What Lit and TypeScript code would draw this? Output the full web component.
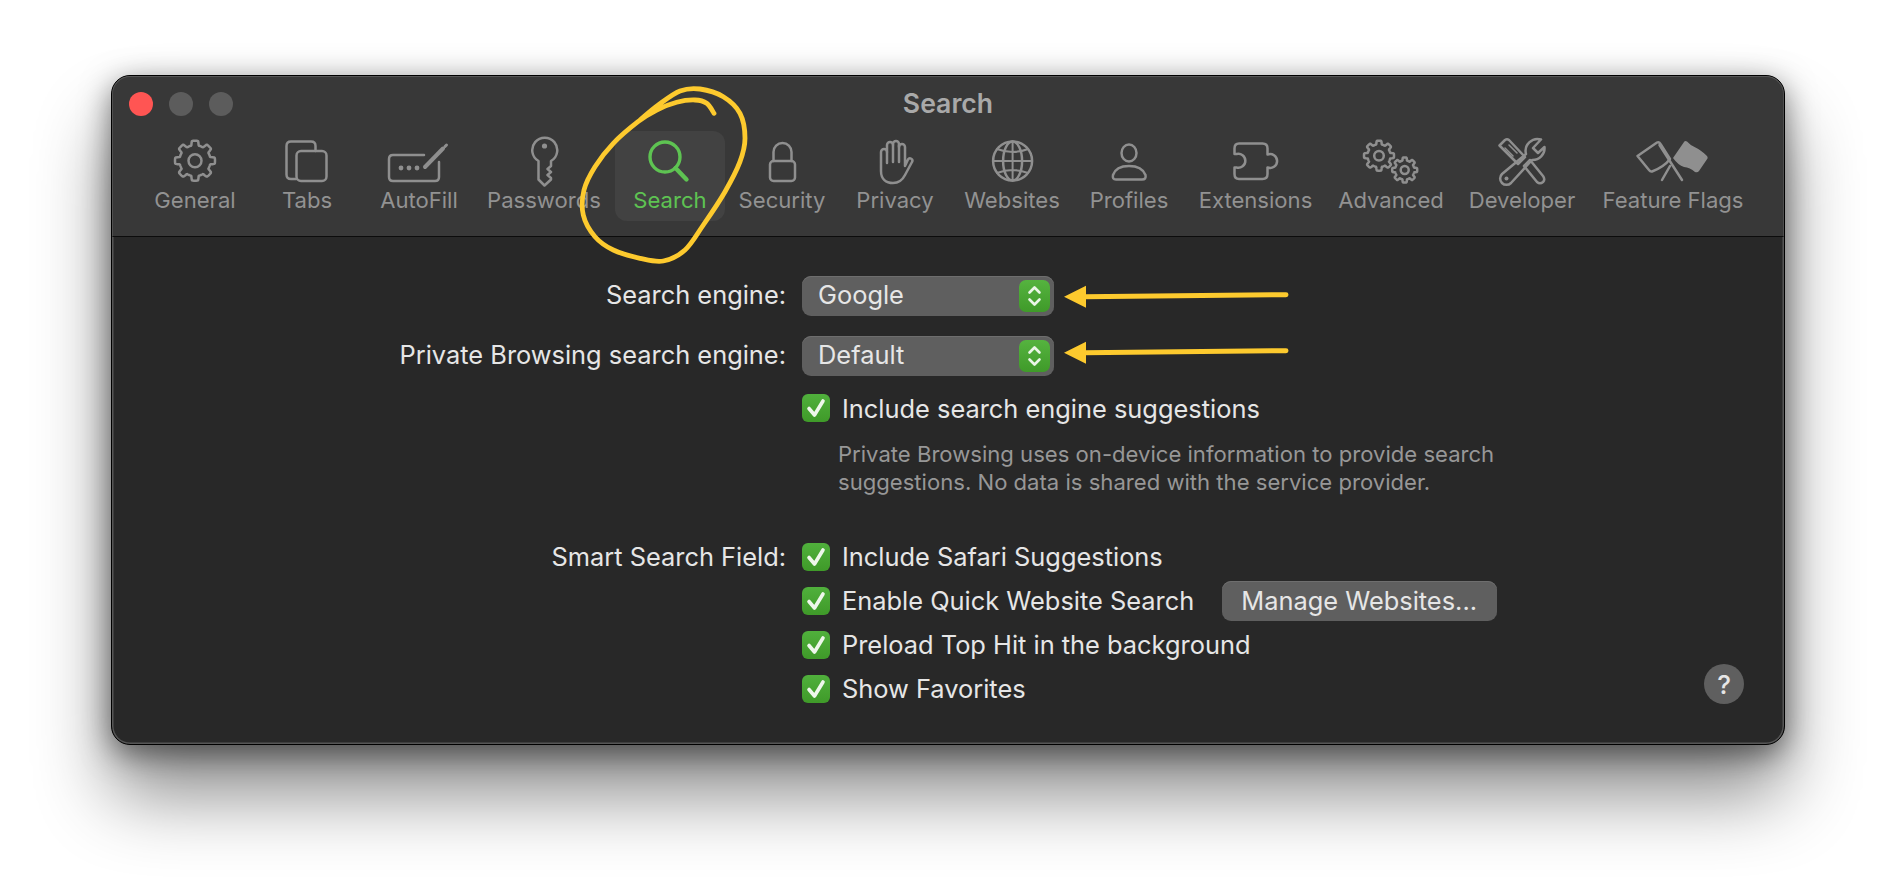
import { LitElement, css, html, svg } from 'lit';
import { customElement } from 'lit/decorators.js';

// smooth gear outline, teeth are rounded lobes like the SF symbol
function gear(cx: number, cy: number, outer: number, inner: number, teeth = 8) {
    const pts: string[] = [];
    const steps = teeth * 24;
    for (let i = 0; i < steps; i++) {
        const a = (i / steps) * Math.PI * 2 - Math.PI / 2;
        const wave = Math.max(0, Math.min(1, Math.cos(a * teeth + Math.PI / 2 * teeth) * 1.5 + 0.5));
        const r = inner + (outer - inner) * wave;
        pts.push(`${(cx + Math.cos(a) * r).toFixed(2)} ${(cy + Math.sin(a) * r).toFixed(2)}`);
    }
    return `M${pts.join('L')}Z`;
}

// catmull-rom through the sampled points of the hand drawn loop
function smooth(p: number[][]) {
    let d = `M${p[0][0]} ${p[0][1]}`;
    for (let i = 0; i < p.length - 1; i++) {
        const a = p[Math.max(i - 1, 0)], b = p[i], c = p[i + 1], e = p[Math.min(i + 2, p.length - 1)];
        const c1 = [b[0] + (c[0] - a[0]) / 6, b[1] + (c[1] - a[1]) / 6];
        const c2 = [c[0] - (e[0] - b[0]) / 6, c[1] - (e[1] - b[1]) / 6];
        d += `C${c1[0].toFixed(1)} ${c1[1].toFixed(1)} ${c2[0].toFixed(1)} ${c2[1].toFixed(1)} ${c[0]} ${c[1]}`;
    }
    return d;
}

const loop = [
    [714, 113.3], [706.7, 103.3], [695, 100], [676.7, 102.3], [656.7, 110], [638, 121.7],
    [613.3, 143.3], [595, 166.7], [584, 190], [583.3, 215], [595, 236.7], [613.3, 250],
    [640, 258.3], [663.3, 261], [685, 250], [703.3, 225], [725, 191.7], [740, 161.7],
    [745, 138.3], [740, 113.3], [723.3, 96.7], [700, 89], [680, 91], [658.3, 105], [640, 120],
];

const icons = {
    general: svg`<path d=${gear(194.7, 161.7, 20, 15.5)} /><circle cx="194.7" cy="161.7" r="6.5" />`,
    tabs: svg`<path d="M296 180 h-1 h-4 q-4.5 0 -4.5 -4.5 V147 q0 -4.5 4.5 -4.5 h20 q4.5 0 4.5 4.5 v5" /><rect x="296.5" y="152" width="30" height="30" rx="4.5" />`,
    autofill: svg`<path d="M424 156 H393 q-4 0 -4 4 V178 q0 4 4 4 H435 q4 0 4 -4 V163" />
        <path d="M425 168 L443 149.5" stroke-width="4" />
        <path d="M445 147.5 L446.5 146" stroke-width="3" />
        <g class="solid"><circle cx="401" cy="169" r="2.4" /><circle cx="409" cy="169" r="2.4" /><circle cx="417" cy="169" r="2.4" /></g>`,
    passwords: svg`<path d="M538.5 162 A12.5 12.5 0 1 1 551 162 V167 L547.5 170 L551 173 L547.5 176 L551 179 V180.5 L544.5 186.5 L538.5 180.5 Z" />
        <circle class="solid" cx="544.5" cy="147" r="2.6" />`,
    search: svg`<g class="green"><circle cx="665" cy="158" r="15" /><path d="M675.5 169 L686.5 180.5" stroke-width="4.4" /></g>`,
    security: svg`<rect x="770" y="162" width="25" height="20" rx="3.5" /><path d="M773.5 162 V153 a9 9 0 0 1 18 0 V162" />`,
    privacy: svg`<path d="M881 172 V153 a3 3 0 0 1 6 0 V146 a3 3 0 0 1 6 0 V145 a3 3 0 0 1 6 0 V148 a3 3 0 0 1 6 0 V167 L908 160.5 a2.3 2.3 0 0 1 4 2.5 L905 176 C902 182 897 184 893 184 C886 184 881 180 881 172 Z" />
        <path d="M887 153 V164 M893 146 V163 M899 146 V163" />`,
    websites: svg`<circle cx="1012.6" cy="162" r="19.5" /><ellipse cx="1012.6" cy="162" rx="9.5" ry="19.5" />
        <path d="M1012.6 142.5 V181.5 M993 162 H1032 M997 150 Q1012.6 156 1028 150 M997 174 Q1012.6 168 1028 174" stroke-width="2" />`,
    profiles: svg`<ellipse cx="1129" cy="154" rx="7.5" ry="8.5" /><path d="M1116 180.5 Q1112 180.5 1113 176 Q1116 167 1129 167 Q1142 167 1145.5 176 Q1146.5 180.5 1142 180.5 Z" />`,
    extensions: svg`<path d="M1238.5 144.5 H1262 Q1267 144.5 1267 149.5 V155.5 A7 7 0 1 1 1267 168.5 V175 Q1267 180 1262 180 H1238.5 Q1234 180 1234 175 V168.5 H1236 A7 7 0 1 0 1236 155 H1234 V149.5 Q1234 144.5 1238.5 144.5 Z" />`,
    advanced: svg`<path d=${gear(1379, 156.7, 15, 11.5)} /><circle cx="1379" cy="156.7" r="4.8" /><path d=${gear(1404.7, 171, 12.5, 9.6)} /><circle cx="1404.7" cy="171" r="4" />`,
    developer: svg`<path d="M1499.5 146.5 L1505 141 Q1507 139.5 1509 141 L1525 158 L1518 165 Z" />
        <path d="M1505 149 L1513 157 M1509 146 L1517 154" stroke-width="1.6" />
        <path d="M1524 167 L1530 161 L1543 177 Q1545.5 180.5 1543 183 Q1540 185.5 1537 183 Z" />
        <path d="M1541 140.5 A12 12 0 0 0 1526 155 L1502 175 A6.3 6.3 0 1 0 1511 184 L1532 161 A12 12 0 0 0 1544.5 148 L1538 154 L1533 149 Z" />
        <circle class="solid" cx="1506.5" cy="179.5" r="2" />`,
    flags: svg`<path d="M1637.5 157 L1657 143.5 Q1659 142.5 1660.5 145 L1670 160 Q1664 168 1652 172.5 Q1650.5 173 1649 171 Z" />
        <path d="M1659.5 146 L1682 181 M1662 181 L1670 167" />
        <path class="solid" d="M1673 159 L1684 143 Q1685 141.5 1687 142.5 Q1691 147 1695.5 148.5 Q1701 151 1707 157 Q1708 158 1707.5 159.5 L1699 172 Q1697.5 174 1695 173 Q1690 168.5 1684 168 Q1678 166 1673 159 Z" />`,
};

const tools = [
    { key: 'general', label: 'General', cx: 194.7 },
    { key: 'tabs', label: 'Tabs', cx: 307 },
    { key: 'autofill', label: 'AutoFill', cx: 419 },
    { key: 'passwords', label: 'Passwords', cx: 544 },
    { key: 'search', label: 'Search', cx: 670 },
    { key: 'security', label: 'Security', cx: 782 },
    { key: 'privacy', label: 'Privacy', cx: 895 },
    { key: 'websites', label: 'Websites', cx: 1012 },
    { key: 'profiles', label: 'Profiles', cx: 1129 },
    { key: 'extensions', label: 'Extensions', cx: 1255.5 },
    { key: 'advanced', label: 'Advanced', cx: 1391 },
    { key: 'developer', label: 'Developer', cx: 1522 },
    { key: 'flags', label: 'Feature Flags', cx: 1673 },
] as const;

const check = html`<span class="check"><svg viewBox="0 0 28 28" width="28" height="28"><path d="M7 14.5 L12.5 21 L21 7" /></svg></span>`;

@customElement('app-root')
export class AppRoot extends LitElement {
    static styles = css`
    :host{
        display:block;
        position:relative;
        height:892px;
        overflow:hidden;
        box-sizing:border-box;
        padding:75px 111px 0;
        background:#fff;
        font-family:Inter,"Liberation Sans",sans-serif;
    }
    .window{
        height:670px;
        box-sizing:border-box;
        display:flex;
        flex-direction:column;
        background:#282828;
        border-radius:19px;
        border:1px solid #000;
        box-shadow:inset 0 0 0 1.5px #565656, 0 50px 75px rgba(0,0,0,.45), 0 8px 30px rgba(0,0,0,.5);
        overflow:hidden;
    }
    .toolbar{
        height:161px;
        flex:none;
        box-sizing:border-box;
        background:#383838;
        border-top:1.5px solid #565656;
        border-left:1.5px solid #505050;
        border-right:1.5px solid #505050;
        border-bottom:1.5px solid #0c0c0c;
        border-radius:18px 18px 0 0;
        position:relative;
    }
    .titlebar{
        height:54px;
        display:flex;
        align-items:center;
        justify-content:center;
        color:#a9a9a9;
        font-size:26.6px;
        font-weight:600;
        padding-bottom:2px;
        box-sizing:border-box;
    }
    .lights{
        position:absolute;
        left:15.5px;
        top:15px;
        display:flex;
        gap:16px;
    }
    .lights span{
        width:24px;
        height:24px;
        border-radius:50%;
        background:#5c5c5c;
    }
    .lights span:first-child{ background:#ff5553; }
    .tools{
        display:grid;
        grid-template-columns:112px 112px 112px 138px 114px 110px 116px 118px 116px 137px 134px 128px 174px;
        padding-left:26px;
    }
    .tool{
        height:90px;
        box-sizing:border-box;
        display:flex;
        flex-direction:column;
        align-items:center;
        padding-top:4px;
        color:#929292;
        font-size:22.1px;
        white-space:nowrap;
    }
    .tool.on{
        background:#424242;
        border-radius:12px;
        margin:0 2px;
        color:#5ec352;
    }
    .tool svg{
        width:80px;
        height:52px;
        flex:none;
        fill:none;
        stroke:#8f8f8f;
        stroke-width:2.5;
        stroke-linecap:round;
        stroke-linejoin:round;
    }
    .tool .solid{ fill:#8f8f8f; stroke:none; }
    .tool .green{ stroke:#5ec352; stroke-width:3.4; }
    .tool span{ line-height:26px; margin-top:0; }
    .body{
        flex:1;
        position:relative;
        display:grid;
        grid-template-columns:674px 1fr;
        column-gap:16px;
        align-content:start;
        padding-top:39px;
        color:#e6e6e6;
        font-size:25.4px;
    }
    .label{
        text-align:right;
        line-height:38px;
        height:40px;
        white-space:nowrap;
    }
    .select{
        width:252px;
        height:40px;
        box-sizing:border-box;
        background:#5f5f5f;
        border-radius:9px;
        display:flex;
        align-items:center;
        justify-content:space-between;
        padding:0 4px 0 16px;
        box-shadow:inset 0 1px 0 #6e6e6e;
    }
    .select b{ font-weight:400; padding-bottom:4px; }
    .stepper{
        width:31px;
        height:32px;
        border-radius:7px;
        background:linear-gradient(#55b33f,#3f9a29);
        display:flex;
    }
    .stepper svg{ fill:none; stroke:#e9f5e6; stroke-width:2.6; stroke-linecap:round; stroke-linejoin:round; }
    .gap{ margin-top:20px; }
    .row{
        display:flex;
        align-items:center;
        gap:12px;
        height:28px;
        white-space:nowrap;
    }
    .txt{ padding-bottom:2px; }
    .check{
        width:28px;
        height:28px;
        flex:none;
        border-radius:6px;
        background:linear-gradient(#50b03c,#3f9a29);
        display:flex;
    }
    .check svg{ fill:none; stroke:#eef7eb; stroke-width:3.6; stroke-linecap:round; stroke-linejoin:round; }
    .first{ grid-column:2; margin-top:18px; }
    .note{
        grid-column:2;
        margin:18px 0 0 36px;
        color:#979797;
        font-size:22.1px;
        line-height:28px;
        white-space:nowrap;
    }
    .smart-label{ line-height:28px; height:28px; margin-top:47px; }
    .smart{
        margin-top:47px;
        display:flex;
        flex-direction:column;
        gap:16px;
    }
    .btn{
        height:40px;
        box-sizing:border-box;
        background:#5f5f5f;
        border-radius:9px;
        box-shadow:inset 0 1px 0 #6e6e6e;
        display:flex;
        align-items:center;
        padding:0 20px 2px 19px;
        margin-left:16px;
    }
    .help{
        position:absolute;
        left:1592px;
        top:427px;
        width:40px;
        height:40px;
        border-radius:50%;
        background:#5f5f5f;
        display:flex;
        align-items:center;
        justify-content:center;
        font-size:26px;
        font-weight:500;
    }
    .marks{
        position:absolute;
        left:0;
        top:0;
        width:1896px;
        height:892px;
        pointer-events:none;
        fill:none;
        stroke:#fdca2e;
        stroke-linecap:round;
        stroke-linejoin:round;
    }
    .marks .head{ fill:#fdca2e; stroke:none; }
    `

    private renderTool(t: (typeof tools)[number]) {
        return html`
        <div class="tool ${t.key === 'search' ? 'on' : ''}">
            <svg viewBox="${t.cx - 40} 136 80 52">${icons[t.key]}</svg>
            <span>${t.label}</span>
        </div>`
    }

    private renderSelect(value: string) {
        return html`
        <div class="select ${value === 'Default' ? 'gap' : ''}">
            <b>${value}</b>
            <div class="stepper">
                <svg viewBox="0 0 31 32" width="31" height="32"><path d="M10.5 12.5 L15.5 7.5 L20.5 12.5 M10.5 19.5 L15.5 24.5 L20.5 19.5" /></svg>
            </div>
        </div>`
    }

    render() {
        return html`
        <div class="window">
            <div class="toolbar">
                <div class="lights"><span></span><span></span><span></span></div>
                <div class="titlebar">Search</div>
                <div class="tools">${tools.map(t => this.renderTool(t))}</div>
            </div>
            <div class="body">
                <div class="label">Search engine:</div>
                ${this.renderSelect('Google')}
                <div class="label gap">Private Browsing search engine:</div>
                ${this.renderSelect('Default')}
                <div class="row first">${check}<span>Include search engine suggestions</span></div>
                <div class="note">Private Browsing uses on-device information to provide search<br>suggestions. No data is shared with the service provider.</div>
                <div class="label smart-label">Smart Search Field:</div>
                <div class="smart">
                    <div class="row">${check}<span class="txt">Include Safari Suggestions</span></div>
                    <div class="row">${check}<span class="txt">Enable Quick Website Search</span><div class="btn">Manage Websites...</div></div>
                    <div class="row">${check}<span class="txt">Preload Top Hit in the background</span></div>
                    <div class="row">${check}<span class="txt">Show Favorites</span></div>
                </div>
                <div class="help">?</div>
            </div>
        </div>
        <svg class="marks" viewBox="0 0 1896 892">
            <path stroke-width="4.8" d=${smooth(loop)} />
            <path stroke-width="5" d="M1286 294.7 L1084 296.7 M1286 350.7 L1084 352.7" />
            <path class="head" d="M1064 296.7 L1086 285.7 L1086 307.7 Z M1064 352.7 L1086 341.7 L1086 363.7 Z" />
        </svg>
        `
    }
}

declare global {
    interface HTMLElementTagNameMap {
        'app-root': AppRoot
    }
}
